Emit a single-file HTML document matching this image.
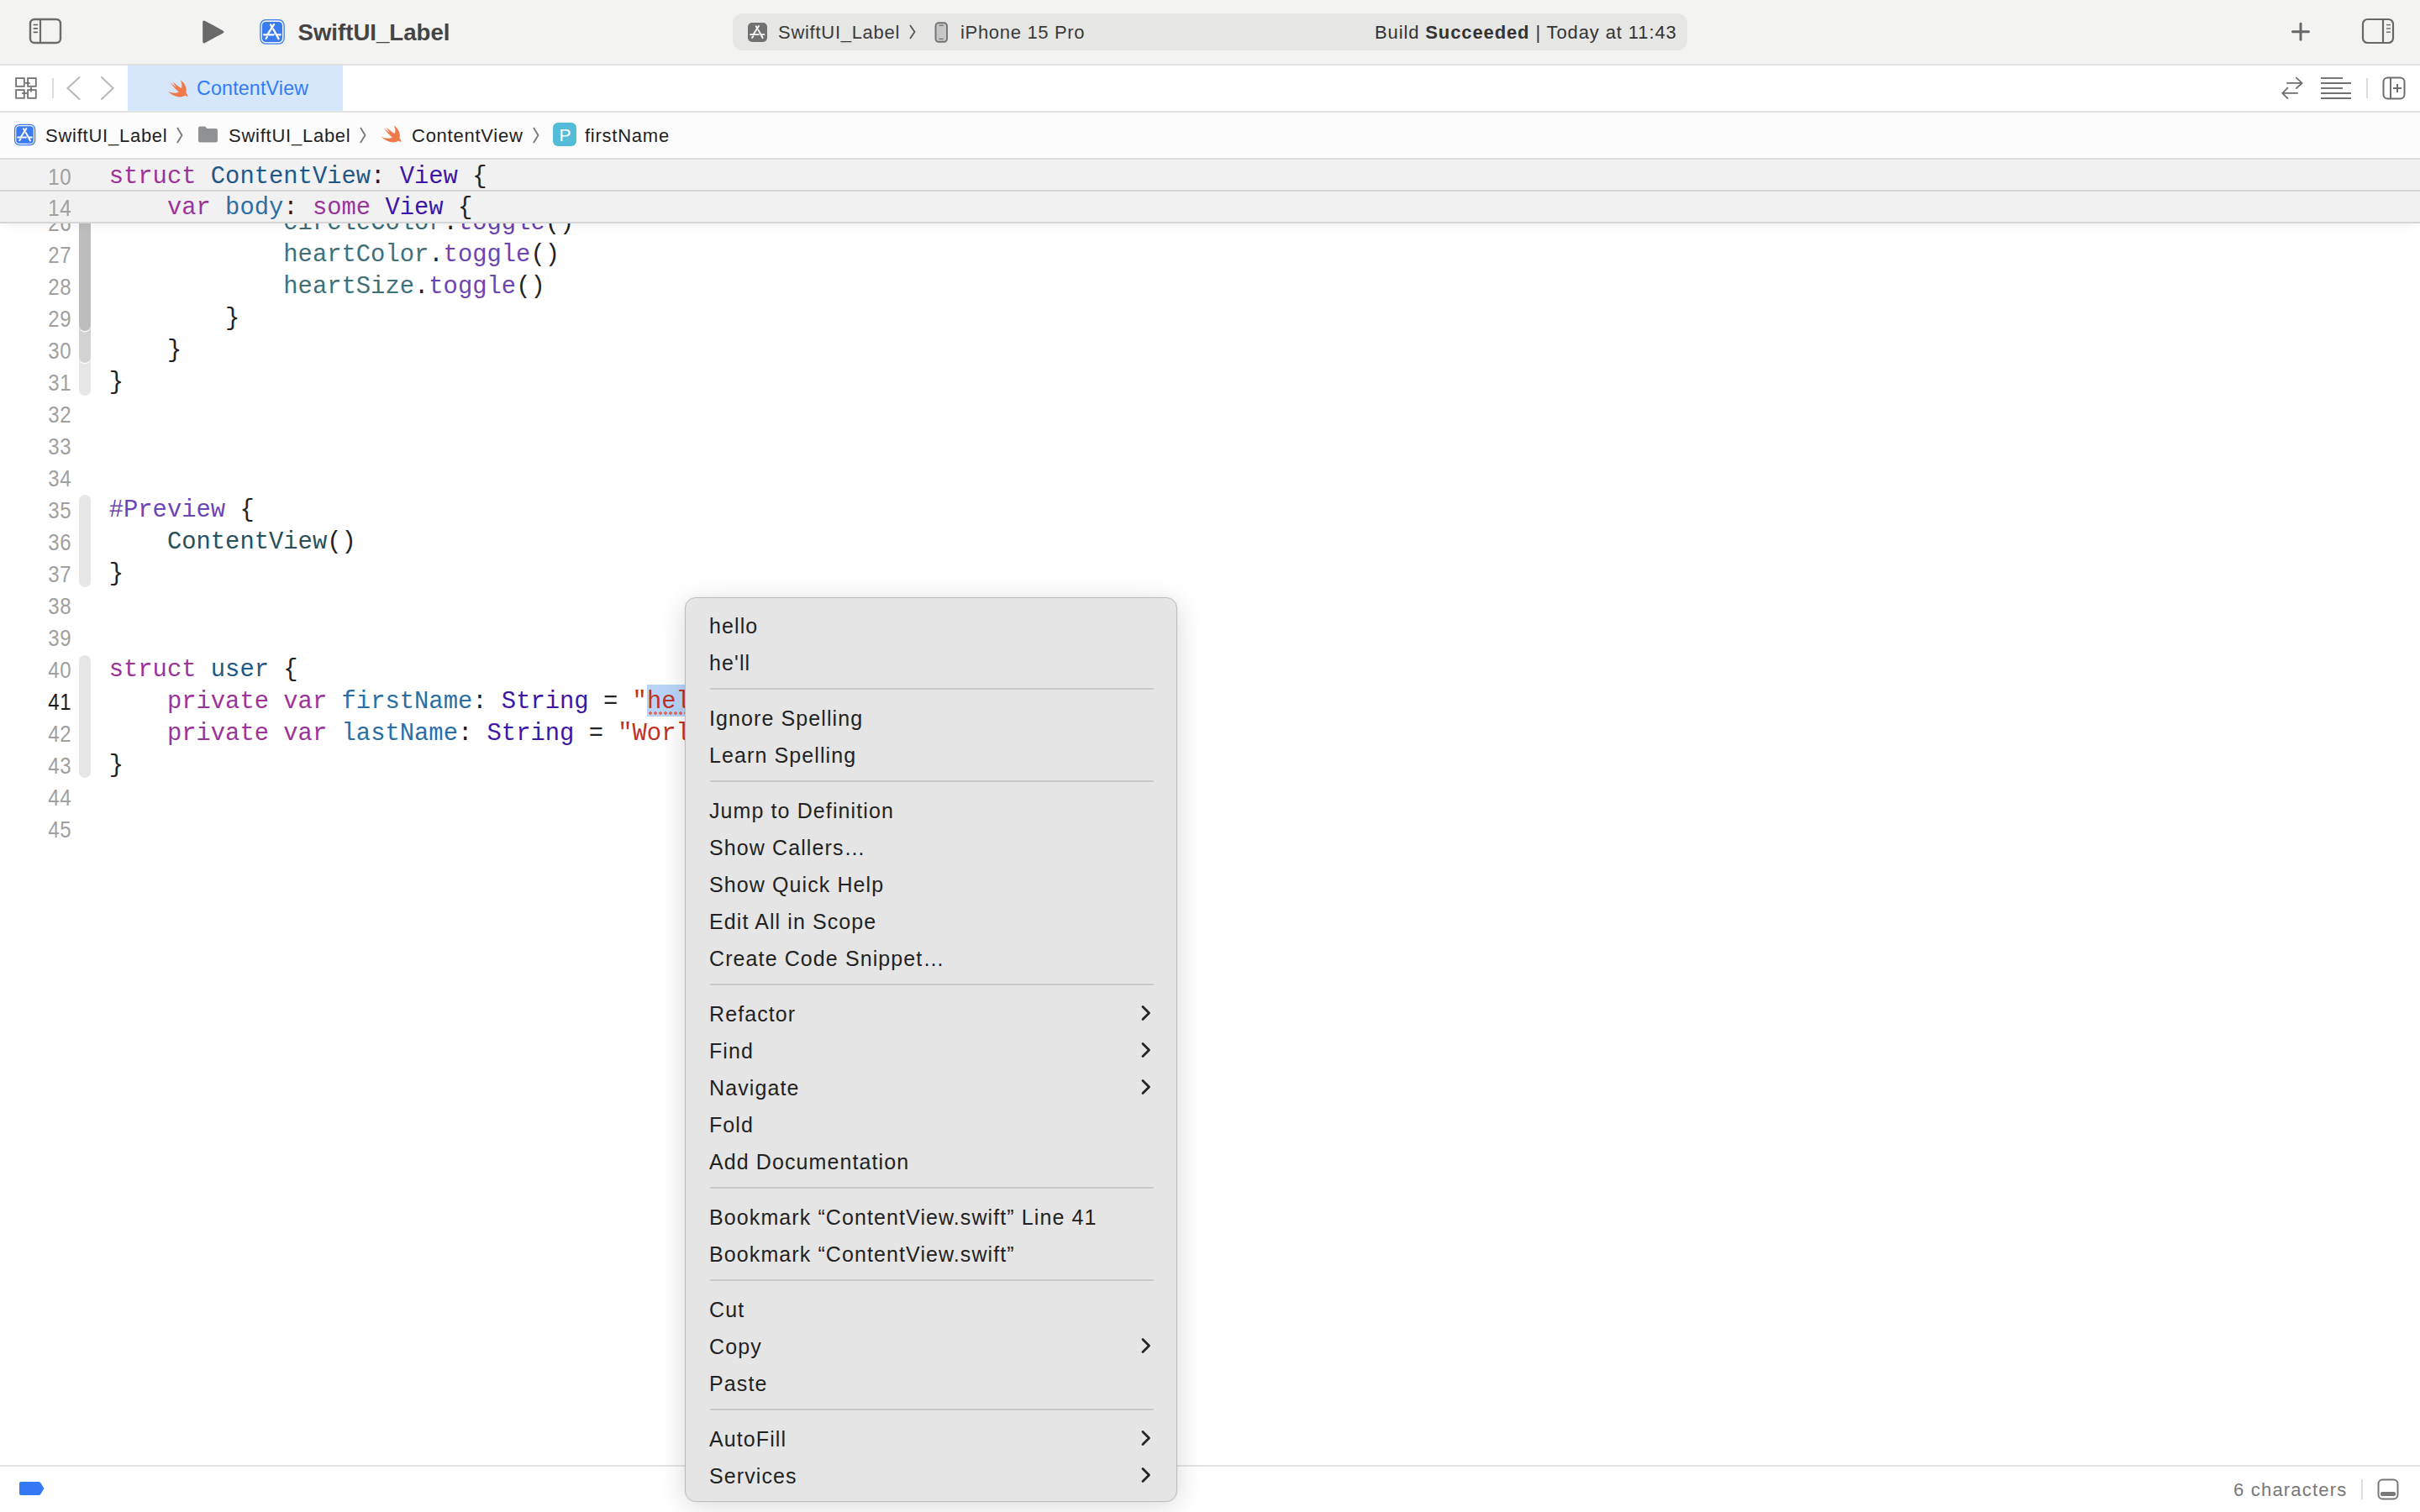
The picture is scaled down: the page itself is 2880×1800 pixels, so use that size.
<!DOCTYPE html>
<html><head><meta charset="utf-8">
<style>
*{margin:0;padding:0;box-sizing:border-box}
html,body{width:2880px;height:1800px;overflow:hidden;background:#fff;font-family:"Liberation Sans",sans-serif;color:#262626}
.a{position:absolute}
.t{position:absolute;white-space:pre;line-height:1}
#toolbar{left:0;top:0;width:2880px;height:77px;background:#f3f3f2}
#tabbar{left:0;top:78px;width:2880px;height:54px;background:#ffffff}
#crumbs{left:0;top:134px;width:2880px;height:54px;background:#fcfcfc}
.hline{position:absolute;left:0;width:2880px;height:2px;background:#e2e2e2}
.code{position:absolute;left:129.7px;font-family:"Liberation Mono",monospace;font-size:28.83px;line-height:38px;white-space:pre;color:#222}
.ln{position:absolute;left:0;width:85px;text-align:right;font-family:"Liberation Sans",sans-serif;font-size:27.9px;line-height:38px;color:#a0a0a0;letter-spacing:0.6px;transform:scaleX(0.86);transform-origin:right center}
.k{color:#9c3398}.td{color:#1f5888}.od{color:#2b6ea6}.st{color:#3d16a8}.pv{color:#3d7079}.fn{color:#6d44b3}.pc{color:#28505a}.s{color:#c1321f}
#menu{left:815px;top:711px;width:586px;height:1077px;background:#e5e5e5;border:1px solid #bcbcbc;border-radius:13px;box-shadow:0 6px 34px rgba(0,0,0,0.14),0 0 3px rgba(0,0,0,0.06)}
.mi{position:absolute;left:28px;font-size:25px;letter-spacing:1.1px;line-height:44px;height:44px;white-space:pre;color:#222}
.sep{position:absolute;left:29px;width:528px;height:2px;background:#cacaca}
.ln.cur{color:#1a1a1a}
.chev{position:absolute;left:541px;width:14px;height:20px}
</style></head><body>

<svg width="0" height="0" style="position:absolute"><defs><symbol id="appA" viewBox="0 0 24 24" overflow="visible"><g stroke="#fff" stroke-width="2.3" stroke-linecap="round" fill="none"><line x1="14.1" y1="3.3" x2="6.9" y2="14.3"/><line x1="6.0" y1="17.9" x2="4.6" y2="19.9"/><line x1="10.1" y1="3.5" x2="11.8" y2="6.4"/><line x1="13.3" y1="8.8" x2="19.6" y2="20.1"/><line x1="2.2" y1="15.4" x2="13.7" y2="15.4"/><line x1="17.8" y1="15.4" x2="21.7" y2="15.4"/></g></symbol></defs></svg>
<!-- TOOLBAR -->
<div id="toolbar" class="a"></div>
<div class="a" style="left:0;top:76px;width:2880px;height:2px;background:#e1e1e1"></div>
<!-- sidebar icon -->
<svg class="a" style="left:34px;top:21px" width="42" height="33" viewBox="0 0 42 33">
 <rect x="2" y="2" width="36" height="28" rx="5" fill="none" stroke="#6b6b6b" stroke-width="2.4"/>
 <line x1="14" y1="2" x2="14" y2="30" stroke="#6b6b6b" stroke-width="2.2"/>
 <g stroke="#626262" stroke-width="1.7" stroke-linecap="round"><line x1="6.4" y1="8.5" x2="10.3" y2="8.5"/><line x1="6.4" y1="12.9" x2="10.3" y2="12.9"/><line x1="6.4" y1="17.3" x2="10.3" y2="17.3"/></g>
</svg>
<!-- play -->
<svg class="a" style="left:240px;top:23px" width="30" height="30" viewBox="0 0 30 30">
 <path d="M1.2 3.6 Q1.2 0.4 4.1 2 L25.4 13.4 Q27.6 14.9 25.4 16.4 L4.1 27.9 Q1.2 29.5 1.2 26.3 Z" fill="#696969"/>
</svg>
<!-- app icon -->
<svg class="a" style="left:308px;top:22px" width="32" height="32" viewBox="0 0 32 32">
 <rect x="1.85" y="1.65" width="28.3" height="28.5" rx="6.5" fill="none" stroke="#3a7bef" stroke-width="1.3"/>
 <rect x="3.9" y="3.9" width="24.1" height="24.1" rx="4.5" fill="#3a7bef"/>
 <use href="#appA" x="3.9" y="3.9" width="24.1" height="24.1"/>
</svg>
<div class="t" style="left:354.5px;top:25px;font-size:27.6px;font-weight:bold;color:#444">SwiftUI_Label</div>

<!-- scheme pill -->
<div class="a" style="left:872px;top:16px;width:1136px;height:44px;background:#e6e6e5;border-radius:12px"></div>
<svg class="a" style="left:889px;top:26px" width="25" height="25" viewBox="0 0 25 25">
 <rect x="1" y="1" width="23" height="23" rx="5" fill="#717171"/>
 <use href="#appA" x="2.3" y="2.3" width="20" height="20"/>
</svg>
<div class="t" style="left:926px;top:28px;font-size:22px;letter-spacing:0.72px;color:#3a3a3a">SwiftUI_Label</div>
<svg class="a" style="left:1081px;top:28px" width="10" height="20" viewBox="0 0 10 20"><path d="M2 2 L7.5 10 L2 18" fill="none" stroke="#555" stroke-width="1.8"/></svg>
<svg class="a" style="left:1110px;top:25px" width="19" height="27" viewBox="0 0 19 27">
 <rect x="3.5" y="2.3" width="13.5" height="22.5" rx="3.5" fill="#c7c7c7" stroke="#727272" stroke-width="1.9"/>
 <g stroke="#727272" stroke-width="1.2" stroke-linecap="round"><line x1="8.2" y1="5.4" x2="12.2" y2="5.4"/><line x1="8" y1="21.4" x2="12.4" y2="21.4"/></g>
</svg>
<div class="t" style="left:1143px;top:28px;font-size:22px;letter-spacing:0.68px;color:#3a3a3a">iPhone 15 Pro</div>
<div class="t" style="left:1636px;top:28px;font-size:22px;letter-spacing:0.88px;color:#333">Build <b>Succeeded</b> | Today at 11:43</div>

<!-- plus -->
<svg class="a" style="left:2724px;top:24px" width="28" height="28" viewBox="0 0 28 28">
 <g stroke="#666" stroke-width="2.9" stroke-linecap="round"><line x1="14" y1="4.2" x2="14" y2="23.2"/><line x1="4.5" y1="13.7" x2="23.5" y2="13.7"/></g>
</svg>
<!-- right sidebar -->
<svg class="a" style="left:2809px;top:20px" width="42" height="34" viewBox="0 0 42 34">
 <rect x="3" y="3" width="36" height="28" rx="5.5" fill="none" stroke="#686868" stroke-width="2.2"/>
 <line x1="27" y1="3" x2="27" y2="31" stroke="#686868" stroke-width="2.2"/>
 <g stroke="#686868" stroke-width="1.4"><line x1="31" y1="9.6" x2="36" y2="9.6"/><line x1="31" y1="14" x2="36" y2="14"/><line x1="31" y1="18.2" x2="36" y2="18.2"/></g>
</svg>

<!-- TAB BAR -->
<div id="tabbar" class="a"></div>
<div class="a" style="left:152px;top:78px;width:256px;height:54px;background:#d6e6fb"></div>
<div class="a" style="left:0;top:132px;width:2880px;height:2px;background:#e3e3e3"></div>
<!-- grid icon -->
<svg class="a" style="left:17px;top:91px" width="28" height="28" viewBox="0 0 28 28">
 <g fill="none" stroke="#717171" stroke-width="1.8">
  <rect x="2.1" y="2.1" width="9.7" height="9.7"/>
  <rect x="16.1" y="2.1" width="9.7" height="9.7"/>
  <rect x="2.1" y="16.1" width="9.7" height="9.7"/>
  <rect x="16.1" y="16.1" width="9.7" height="9.7"/>
  <line x1="12.7" y1="7.9" x2="18.7" y2="7.9"/><line x1="20" y1="12.7" x2="20" y2="18.6"/><line x1="9.2" y1="20" x2="15.2" y2="20"/>
 </g>
</svg>
<div class="a" style="left:62px;top:93px;width:2px;height:24px;background:#dcdcdc"></div>
<svg class="a" style="left:78px;top:90px" width="60" height="30" viewBox="0 0 60 30">
 <g fill="none" stroke="#bababa" stroke-width="2.1" stroke-linecap="round"><path d="M16.5 2 L2.5 15 L16.5 28"/><path d="M43 2 L56.6 15 L43 28"/></g>
</svg>
<!-- swift icon tab -->
<svg class="a" style="left:198px;top:94px" width="28" height="24" viewBox="0 0 28 24">
 <path d="M16.6 1.2 C21.5 4.5 25 10 23.5 16.5 C24.8 18 25.6 20 25.4 21.6 C24.2 20.3 22.8 19.6 21.8 19.8 C17.5 22.5 10 22.5 1.6 14.5 C6.5 17 11.5 17.5 14.8 15.4 C11 12.5 7.5 8.5 4.5 4.3 C7 6.5 9.5 8.5 11.9 9.9 C10.2 7.8 8.7 5.6 7.5 3.3 C10.5 6 14.5 9.5 17.8 11.3 C19 8 18.5 4 16.6 1.2 Z" fill="#f0794a"/>
</svg>
<div class="t" style="left:234px;top:94.3px;font-size:23.2px;letter-spacing:0.2px;color:#2f7cf6">ContentView</div>
<!-- right tab icons -->
<svg class="a" style="left:2712px;top:90px" width="30" height="30" viewBox="0 0 30 30">
 <g fill="none" stroke="#6e6e6e" stroke-width="1.8">
  <path d="M9.2 8.9 H27.5 M20.3 2.1 L27.6 8.9 L20.3 15.6"/>
  <path d="M22.8 20.9 H4.5 M11 14.2 L4.3 20.9 L11 27.6"/>
 </g>
</svg>
<svg class="a" style="left:2760px;top:90px" width="40" height="30" viewBox="0 0 40 30">
 <g stroke="#707070" stroke-width="1.9"><line x1="2" y1="3" x2="28" y2="3"/><line x1="2" y1="9" x2="38" y2="9"/><line x1="2" y1="15" x2="28" y2="15"/><line x1="2" y1="21" x2="38" y2="21"/><line x1="2" y1="27" x2="38" y2="27"/></g>
</svg>
<div class="a" style="left:2816px;top:93px;width:2px;height:24px;background:#dcdcdc"></div>
<svg class="a" style="left:2834px;top:90px" width="30" height="30" viewBox="0 0 30 30">
 <g fill="none" stroke="#6e6e6e" stroke-width="2">
  <rect x="2.5" y="2.5" width="25" height="25" rx="5"/>
  <line x1="11" y1="2.5" x2="11" y2="27.5"/>
  <line x1="19" y1="10" x2="19" y2="20"/><line x1="14" y1="15" x2="24" y2="15"/>
 </g>
</svg>

<!-- BREADCRUMBS -->
<div id="crumbs" class="a"></div>
<svg class="a" style="left:16px;top:146.5px" width="27.2" height="27.2" viewBox="0 0 32 32">
 <rect x="1.85" y="1.65" width="28.3" height="28.5" rx="6.5" fill="none" stroke="#3a7bef" stroke-width="1.5"/>
 <rect x="3.9" y="3.9" width="24.1" height="24.1" rx="4.5" fill="#3a7bef"/>
 <use href="#appA" x="3.9" y="3.9" width="24.1" height="24.1"/>
</svg>
<div class="t" style="left:54px;top:151px;font-size:22px;letter-spacing:0.75px;color:#222">SwiftUI_Label</div>
<svg class="a" style="left:209px;top:150px" width="10" height="22" viewBox="0 0 10 22"><path d="M2 2 L7.5 11 L2 20" fill="none" stroke="#777" stroke-width="1.8"/></svg>
<svg class="a" style="left:234px;top:149px" width="27" height="22" viewBox="0 0 27 22">
 <path d="M2 3.5 Q2 1.5 4 1.5 H10 L12.5 4 H23 Q25 4 25 6 V18.5 Q25 20.5 23 20.5 H4 Q2 20.5 2 18.5 Z" fill="#8f9295"/>
</svg>
<div class="t" style="left:272px;top:151px;font-size:22px;letter-spacing:0.75px;color:#222">SwiftUI_Label</div>
<svg class="a" style="left:427px;top:150px" width="10" height="22" viewBox="0 0 10 22"><path d="M2 2 L7.5 11 L2 20" fill="none" stroke="#777" stroke-width="1.8"/></svg>
<svg class="a" style="left:452px;top:148px" width="28" height="24" viewBox="0 0 28 24">
 <path d="M16.6 1.2 C21.5 4.5 25 10 23.5 16.5 C24.8 18 25.6 20 25.4 21.6 C24.2 20.3 22.8 19.6 21.8 19.8 C17.5 22.5 10 22.5 1.6 14.5 C6.5 17 11.5 17.5 14.8 15.4 C11 12.5 7.5 8.5 4.5 4.3 C7 6.5 9.5 8.5 11.9 9.9 C10.2 7.8 8.7 5.6 7.5 3.3 C10.5 6 14.5 9.5 17.8 11.3 C19 8 18.5 4 16.6 1.2 Z" fill="#f0794a"/>
</svg>
<div class="t" style="left:490px;top:151px;font-size:22px;letter-spacing:0.75px;color:#222">ContentView</div>
<svg class="a" style="left:633px;top:150px" width="10" height="22" viewBox="0 0 10 22"><path d="M2 2 L7.5 11 L2 20" fill="none" stroke="#777" stroke-width="1.8"/></svg>
<div class="a" style="left:658px;top:146px;width:28px;height:28px;background:#54bcd8;border-radius:6px;color:#fff;font-size:21px;line-height:29px;text-align:center;padding-left:1px">P</div>
<div class="t" style="left:696px;top:151px;font-size:22px;letter-spacing:0.75px;color:#222">firstName</div>

<!-- CODE AREA -->
<div class="a" style="left:94px;top:392px;width:14px;height:79px;background:#e6e6e6;border-radius:0 0 7px 7px"></div>
<div class="a" style="left:94px;top:250px;width:14px;height:182px;background:#d2d2d2;border-radius:0 0 7px 7px;box-shadow:0 1.6px 0 0 rgba(255,255,255,0.85)"></div>
<div class="a" style="left:94px;top:250px;width:14px;height:144px;background:#bdbdbd;border-radius:0 0 7px 7px;box-shadow:0 1.6px 0 0 rgba(255,255,255,0.85)"></div>
<div class="a" style="left:94px;top:589px;width:14px;height:110px;background:#e6e6e6;border-radius:7px"></div>
<div class="a" style="left:94px;top:780px;width:14px;height:146px;background:#e6e6e6;border-radius:7px"></div>
<div class="a" style="left:770px;top:815px;width:60px;height:38px;background:#b8d5f9"></div>
<div class="a" style="left:771px;top:847px;width:48px;height:4px;background-image:radial-gradient(circle,#e06c62 1.8px,transparent 2.1px);background-size:6px 4px"></div>
<div class="ln" style="top:246.9px">26</div>
<div class="code" style="top:247.2px">            <span class="pv">circleColor</span>.<span class="fn">toggle</span>()</div>
<div class="ln" style="top:284.9px">27</div>
<div class="code" style="top:285.2px">            <span class="pv">heartColor</span>.<span class="fn">toggle</span>()</div>
<div class="ln" style="top:322.9px">28</div>
<div class="code" style="top:323.2px">            <span class="pv">heartSize</span>.<span class="fn">toggle</span>()</div>
<div class="ln" style="top:360.9px">29</div>
<div class="code" style="top:361.2px">        }</div>
<div class="ln" style="top:398.9px">30</div>
<div class="code" style="top:399.2px">    }</div>
<div class="ln" style="top:436.9px">31</div>
<div class="code" style="top:437.2px">}</div>
<div class="ln" style="top:474.9px">32</div>
<div class="ln" style="top:512.9px">33</div>
<div class="ln" style="top:550.9px">34</div>
<div class="ln" style="top:588.9px">35</div>
<div class="code" style="top:589.2px"><span class="fn">#Preview</span> {</div>
<div class="ln" style="top:626.9px">36</div>
<div class="code" style="top:627.2px">    <span class="pc">ContentView</span>()</div>
<div class="ln" style="top:664.9px">37</div>
<div class="code" style="top:665.2px">}</div>
<div class="ln" style="top:702.9px">38</div>
<div class="ln" style="top:740.9px">39</div>
<div class="ln" style="top:778.9px">40</div>
<div class="code" style="top:779.2px"><span class="k">struct</span> <span class="td">user</span> {</div>
<div class="ln cur" style="top:816.9px">41</div>
<div class="code" style="top:817.2px">    <span class="k">private</span> <span class="k">var</span> <span class="od">firstName</span>: <span class="st">String</span> = <span class="s">"<span class="sel">hello</span>"</span></div>
<div class="ln" style="top:854.9px">42</div>
<div class="code" style="top:855.2px">    <span class="k">private</span> <span class="k">var</span> <span class="od">lastName</span>: <span class="st">String</span> = <span class="s">"World"</span></div>
<div class="ln" style="top:892.9px">43</div>
<div class="code" style="top:893.2px">}</div>
<div class="ln" style="top:930.9px">44</div>
<div class="ln" style="top:968.9px">45</div>
<div class="a" style="left:0;top:188px;width:2880px;height:78px;background:#f1f1f2;box-shadow:0 8px 12px -6px rgba(0,0,0,0.07)"></div>
<div class="a" style="left:0;top:188px;width:2880px;height:1.5px;background:#dcdcdc"></div>
<div class="a" style="left:0;top:225.5px;width:2880px;height:2px;background:#d6d6d6"></div>
<div class="a" style="left:0;top:264px;width:2880px;height:2px;background:#d6d6d6"></div>
<div class="ln" style="top:191.5px">10</div>
<div class="code" style="top:191.5px"><span class="k">struct</span> <span class="td">ContentView</span>: <span class="st">View</span> {</div>
<div class="ln" style="top:229.1px">14</div>
<div class="code" style="top:229.1px">    <span class="k">var</span> <span class="od">body</span>: <span class="k">some</span> <span class="st">View</span> {</div>

<!-- STATUS BAR -->
<div class="a" style="left:0;top:1744px;width:2880px;height:2px;background:#e4e4e4"></div>
<svg class="a" style="left:22px;top:1763px" width="32" height="20" viewBox="0 0 32 20">
 <path d="M1 3 Q1 1 3 1 H24 Q25.5 1 26.5 2.5 L30.5 9 L26.5 15.5 Q25.5 17 24 17 H3 Q1 17 1 15 Z" fill="#3478f6"/>
</svg>
<div class="t" style="left:2658px;top:1763px;font-size:22px;letter-spacing:1.2px;color:#777">6 characters</div>
<div class="a" style="left:2810px;top:1761px;width:2px;height:24px;background:#dedede"></div>
<svg class="a" style="left:2828px;top:1759px" width="28" height="28" viewBox="0 0 28 28">
 <rect x="2.5" y="2.5" width="23" height="23" rx="5" fill="none" stroke="#777" stroke-width="2"/>
 <rect x="5" y="17" width="18" height="5" rx="2" fill="#777"/>
</svg>

<!-- MENU -->
<div id="menu" class="a">
<div class="mi" style="top:11px">hello</div>
<div class="mi" style="top:55px">he'll</div>
<div class="sep" style="top:107px"></div>
<div class="mi" style="top:121px">Ignore Spelling</div>
<div class="mi" style="top:165px">Learn Spelling</div>
<div class="sep" style="top:217px"></div>
<div class="mi" style="top:231px">Jump to Definition</div>
<div class="mi" style="top:275px">Show Callers…</div>
<div class="mi" style="top:319px">Show Quick Help</div>
<div class="mi" style="top:363px">Edit All in Scope</div>
<div class="mi" style="top:407px">Create Code Snippet…</div>
<div class="sep" style="top:459px"></div>
<div class="mi" style="top:473px">Refactor</div>
<svg class="chev" style="top:484px" viewBox="0 0 14 20"><path d="M3 2.5 L10.5 10 L3 17.5" fill="none" stroke="#262626" stroke-width="2.8" stroke-linecap="round" stroke-linejoin="round"/></svg>
<div class="mi" style="top:517px">Find</div>
<svg class="chev" style="top:528px" viewBox="0 0 14 20"><path d="M3 2.5 L10.5 10 L3 17.5" fill="none" stroke="#262626" stroke-width="2.8" stroke-linecap="round" stroke-linejoin="round"/></svg>
<div class="mi" style="top:561px">Navigate</div>
<svg class="chev" style="top:572px" viewBox="0 0 14 20"><path d="M3 2.5 L10.5 10 L3 17.5" fill="none" stroke="#262626" stroke-width="2.8" stroke-linecap="round" stroke-linejoin="round"/></svg>
<div class="mi" style="top:605px">Fold</div>
<div class="mi" style="top:649px">Add Documentation</div>
<div class="sep" style="top:701px"></div>
<div class="mi" style="top:715px">Bookmark “ContentView.swift” Line 41</div>
<div class="mi" style="top:759px">Bookmark “ContentView.swift”</div>
<div class="sep" style="top:811px"></div>
<div class="mi" style="top:825px">Cut</div>
<div class="mi" style="top:869px">Copy</div>
<svg class="chev" style="top:880px" viewBox="0 0 14 20"><path d="M3 2.5 L10.5 10 L3 17.5" fill="none" stroke="#262626" stroke-width="2.8" stroke-linecap="round" stroke-linejoin="round"/></svg>
<div class="mi" style="top:913px">Paste</div>
<div class="sep" style="top:965px"></div>
<div class="mi" style="top:979px">AutoFill</div>
<svg class="chev" style="top:990px" viewBox="0 0 14 20"><path d="M3 2.5 L10.5 10 L3 17.5" fill="none" stroke="#262626" stroke-width="2.8" stroke-linecap="round" stroke-linejoin="round"/></svg>
<div class="mi" style="top:1023px">Services</div>
<svg class="chev" style="top:1034px" viewBox="0 0 14 20"><path d="M3 2.5 L10.5 10 L3 17.5" fill="none" stroke="#262626" stroke-width="2.8" stroke-linecap="round" stroke-linejoin="round"/></svg>
</div>
</body></html>
